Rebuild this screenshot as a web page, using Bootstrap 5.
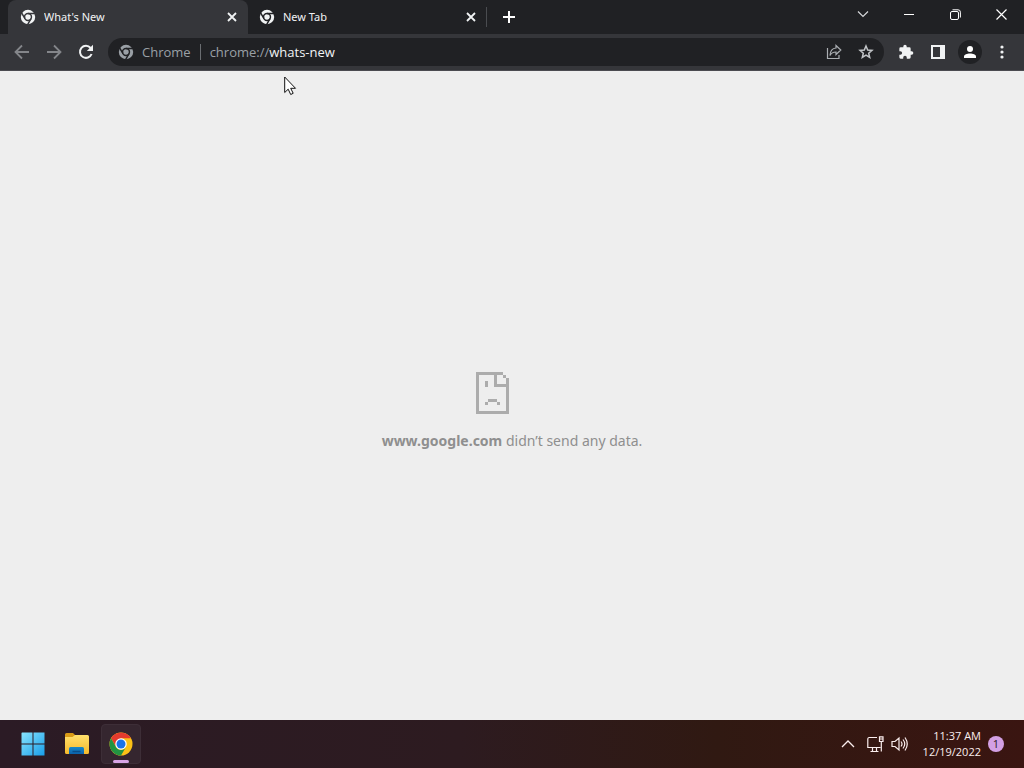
<!DOCTYPE html>
<html lang="en">
<head>
<meta charset="utf-8">
<meta name="viewport" content="width=device-width, initial-scale=1">
<title>What's New</title>
<link rel="stylesheet" href="https://cdn.jsdelivr.net/npm/bootstrap@5.3.0/dist/css/bootstrap.min.css">
<style>
  body { font-family: "Open Sans", "Noto Sans", sans-serif; font-size: 11px; line-height: 16px; background: #eee; }
  svg { display: block; flex: none; }
  button { border: 0; padding: 0; background: none; color: inherit; }
  .tabstrip { height: 34px; background: #202124; color: #e8eaed; padding-left: 8px; }
  .browser-tab { flex: 0 1 240px; min-width: 0; height: 34px; padding: 0 10px 0 12px; color: #f1f3f4; font-family: "Noto Sans", sans-serif; }
  .browser-tab.active { background: #35363a; border-radius: 8px 8px 0 0; }
  .browser-tab.idle { flex-basis: 238px; padding: 0 9px 0 11px; }
  .divider-line { width: 1px; height: 20px; background: #4a4c50; }
  .new-tab { width: 43px; height: 34px; }
  .win-btn { width: 46px; height: 28px; }
  .toolbar { height: 37px; background: #35363a; border-bottom: 1px solid #4b4b50; padding: 0 6px; color: #f1f3f4; }
  .tool { width: 32px; height: 28px; }
  .tool.dim { color: #84868a; }
  .omnibox { height: 28px; border-radius: 14px; background: #202124; color: #9aa0a6; font-size: 13px; line-height: 20px; margin: 0 6px; padding: 0 2px 0 10px; }
  .omnibox .divider-line { height: 16px; background: #6a6d71; margin: 0 9px; }
  .omnibox input { border: 0; outline: 0; padding: 0; background: none; color: #f1f3f4; min-width: 0; }
  .avatar { width: 24px; height: 24px; border-radius: 50%; background: #202124; }
  .failure { padding-top: 32px; color: #8f8f8f; font-family: "Noto Sans", sans-serif; font-size: 14px; line-height: 20px; }
  .sad-box { width: 72px; margin-bottom: 17px; }
  .taskbar { height: 48px; background: linear-gradient(90deg, #2b1b25, #2d1b20 45%, #301912 70%, #3a1511); color: #fbeeee; padding: 0 20px 0 11px; }
  .task { width: 44px; height: 40px; }
  .task.running span { width: 40px; height: 40px; border-radius: 4px; background: #35262f; border: 1px solid #3d2e37; }
  .task.running i { left: 14px; bottom: 1px; width: 16px; height: 3px; border-radius: 2px; background: #d9a5e6; }
  .tray-btn { width: 24px; height: 32px; }
  .tray-btn.more { width: 32px; }
  .clock { margin: 0 7px 0 11px; }
  .note-count { width: 16px; height: 16px; border-radius: 50%; background: #d3a0e4; color: #2b1b25; }
  .pointer { left: 284px; top: 76px; pointer-events: none; }
</style>
</head>
<body class="vh-100 d-flex flex-column overflow-hidden">
<svg width="0" height="0" class="position-absolute" aria-hidden="true">
  <defs>
    <symbol id="chrome-mono" viewBox="0 0 24 24">
      <mask id="cuts"><rect width="24" height="24" fill="#fff"/><g fill="none" stroke="#000" stroke-width="2.200"><circle cx="12" cy="12" r="5.200"/><path d="M12 6.800H24M7.500 14.600L1.500 4.200M16.500 14.600L10.500 25"/></g></mask>
      <circle cx="12" cy="12" r="10.800" fill="currentColor" mask="url(#cuts)"/>
    </symbol>
    <symbol id="close-x" viewBox="0 0 10 10"><path d="M1 1l8 8M9 1L1 9" stroke="currentColor" stroke-width="1.800"/></symbol>
  </defs>
</svg>

<header>
  <div class="tabstrip d-flex align-items-center">
    <div class="browser-tab active d-flex align-items-center">
      <svg width="16" height="16"><use href="#chrome-mono"/></svg>
      <span class="ms-2 flex-fill text-truncate">What's New</span>
      <button aria-label="Close What's New"><svg width="12" height="10"><use href="#close-x"/></svg></button>
    </div>
    <div class="browser-tab idle d-flex align-items-center">
      <svg width="16" height="16"><use href="#chrome-mono"/></svg>
      <span class="ms-2 flex-fill text-truncate">New Tab</span>
      <button aria-label="Close New Tab"><svg width="12" height="10"><use href="#close-x"/></svg></button>
    </div>
    <div class="divider-line"></div>
    <button class="new-tab d-flex align-items-center justify-content-center" aria-label="New tab"><svg width="12" height="12"><path d="M6 0v12M0 6h12" stroke="#fff" stroke-width="2"/></svg></button>
    <div class="d-flex ms-auto align-self-start">
      <button class="win-btn d-flex align-items-center justify-content-center" aria-label="Search tabs"><svg width="12" height="8"><path d="M1 1.500l5 5 5-5" fill="none" stroke="#d5d7da" stroke-width="1.200"/></svg></button>
      <button class="win-btn d-flex align-items-center justify-content-center" aria-label="Minimize"><svg width="10" height="3"><path d="M0 1.500h10" stroke="#fff"/></svg></button>
      <button class="win-btn d-flex align-items-center justify-content-center" aria-label="Restore"><svg width="11" height="11" fill="none" stroke="#fff"><rect x=".5" y="2.500" width="8" height="8" rx="1.500"/><path d="M2.500.8H8a2.400 2.400 0 0 1 2.400 2.400V8.500"/></svg></button>
      <button class="win-btn d-flex align-items-center justify-content-center" aria-label="Close"><svg width="11" height="11"><path d="M.5.5l10 10M10.500.5l-10 10" stroke="#fff" stroke-width="1.200"/></svg></button>
    </div>
  </div>

  <div class="toolbar d-flex align-items-center">
    <button class="tool dim d-flex align-items-center justify-content-center" aria-label="Back"><svg width="16" height="16" fill="none" stroke="currentColor" stroke-width="1.800"><path d="M15 8H2M8 1.500L1.500 8 8 14.500"/></svg></button>
    <button class="tool dim d-flex align-items-center justify-content-center" aria-label="Forward"><svg width="16" height="16" fill="none" stroke="currentColor" stroke-width="1.800"><path d="M1 8h13M8 1.500L14.500 8 8 14.500"/></svg></button>
    <button class="tool d-flex align-items-center justify-content-center" aria-label="Reload"><svg width="16" height="16"><path d="M13.600 10A6 6 0 1 1 12.600 4" fill="none" stroke="currentColor" stroke-width="2"/><path d="M15 .8V7H8.800z" fill="currentColor"/></svg></button>
    <div class="omnibox d-flex align-items-center flex-fill">
      <button class="d-flex align-items-center"><svg width="16" height="16"><use href="#chrome-mono"/></svg><span class="ms-2">Chrome</span></button>
      <div class="divider-line"></div>
      <label for="address">chrome://</label><input id="address" class="flex-fill" type="text" value="whats-new">
      <button class="tool d-flex align-items-center justify-content-center" aria-label="Share"><svg width="16" height="16" fill="none" stroke="#aaaeb2" stroke-width="1.200"><path d="M1.500 4v10.500h11.500V11M10 1.500L14.800 6 10 10.500V8C7 8 5.200 9 4 11.500 4.200 7 6.500 4.300 10 4z"/></svg></button>
      <button class="tool d-flex align-items-center justify-content-center" aria-label="Bookmark"><svg width="16" height="16" fill="none" stroke="#c2c5c8" stroke-width="1.500"><path d="M8 2l1.700 4 4.300.4-3.300 2.800 1 4.300L8 11.200l-3.700 2.300 1-4.300L2 6.400 6.300 6z"/></svg></button>
    </div>
    <button class="tool d-flex align-items-center justify-content-center" aria-label="Extensions"><svg width="16" height="16" viewBox="0 0 24 24" fill="currentColor"><path d="M20.500 11H19V7a2 2 0 0 0-2-2h-4V3.500a2.500 2.500 0 0 0-5 0V5H4a2 2 0 0 0-2 2v3.800h1.500a2.700 2.700 0 0 1 0 5.400H2V20a2 2 0 0 0 2 2h3.800v-1.500a2.700 2.700 0 0 1 5.400 0V22H17a2 2 0 0 0 2-2v-4h1.500a2.500 2.500 0 0 0 0-5z"/></svg></button>
    <button class="tool d-flex align-items-center justify-content-center" aria-label="Side panel"><svg width="14" height="14"><path fill="currentColor" fill-rule="evenodd" d="M0 0h14v14H0zM2 2v10h7V2z"/></svg></button>
    <button class="tool d-flex align-items-center justify-content-center" aria-label="Profile"><span class="avatar d-flex align-items-center justify-content-center"><svg width="12" height="12" fill="#fff"><circle cx="6" cy="3" r="3"/><path d="M0 12v-1.500C0 8.500 3 7.500 6 7.500s6 1 6 3V12z"/></svg></span></button>
    <button class="tool d-flex align-items-center justify-content-center" aria-label="Menu"><svg width="4" height="14" fill="currentColor"><circle cx="2" cy="2" r="1.600"/><circle cx="2" cy="7" r="1.600"/><circle cx="2" cy="12" r="1.600"/></svg></button>
  </div>
</header>

<main class="failure flex-fill d-flex flex-column align-items-center justify-content-center">
  <div class="sad-box"><svg width="33" height="42" viewBox="0 0 11 14" fill="#acacac" shape-rendering="crispEdges"><path d="M0 0h9v1H0zM0 1h1v12H0zM0 13h11v1H0zM10 2h1v11h-1zM6 1h1v4H6zM7 4h3v1H7zM9 1h1v1H9zM3 3h1v2H3zM3 10h1v1H3zM7 10h1v1H7zM4 9h3v1H4z"/></svg></div>
  <p class="mb-0"><strong>www.google.com</strong> didn’t send any data.</p>
</main>

<footer class="taskbar d-flex align-items-center">
  <button class="task d-flex align-items-center justify-content-center" aria-label="Start"><svg width="24" height="24"><defs><linearGradient id="win" x1="0" y1="0" x2="24" y2="24" gradientUnits="userSpaceOnUse"><stop stop-color="#8be6ff"/><stop offset="1" stop-color="#169ce8"/></linearGradient></defs><path fill="url(#win)" d="M1 .5h10.500v11H.5V1zM12.500.5h11v11h-11zM.5 12.500h11v11H.5zM12.500 12.500h11v11h-11z"/></svg></button>
  <button class="task d-flex align-items-center justify-content-center" aria-label="File Explorer"><svg width="26" height="24"><defs><linearGradient id="fold" x2="0" y2="1"><stop stop-color="#ffe06c"/><stop offset="1" stop-color="#f5b92b"/></linearGradient><linearGradient id="tray" x2="0" y2="1"><stop stop-color="#1689c9"/><stop offset="1" stop-color="#0b62ab"/></linearGradient></defs><path fill="#d99b16" d="M1 2.500Q1 1 2.500 1H9l2.500 2.500L9 6H1z"/><path fill="url(#fold)" d="M1 5h7.500l2.500-2h12.500Q25 3 25 4.500v16q0 1.500-1.500 1.500h-21Q1 22 1 20.500z"/><path fill="url(#tray)" d="M5 22v-5.500Q5 15 6.500 15h12q1.500 0 1.500 1.500V22z"/><path d="M8.500 19.500h8" stroke="#0a4c88" stroke-width="1.500"/></svg></button>
  <button class="task running position-relative d-flex align-items-center justify-content-center" aria-label="Google Chrome"><span class="d-flex align-items-center justify-content-center"><svg width="24" height="24" viewBox="0 0 48 48"><circle cx="24" cy="24" r="23" fill="#fbc116"/><path fill="#e33b2e" d="M4.100 12.500A23 23 0 0 1 43.900 12.500H24L14 29.700z"/><path fill="#229342" d="M4.100 12.500A23 23 0 0 0 24 47l10-17.200a11.500 11.500 0 0 1-20 0z"/><circle cx="24" cy="24" r="11.500" fill="#fff"/><circle cx="24" cy="24" r="9" fill="#1a73e8"/></svg></span><i class="position-absolute"></i></button>
  <div class="d-flex align-items-center ms-auto">
    <button class="tray-btn more d-flex align-items-center justify-content-center" aria-label="Show hidden icons"><svg width="14" height="8"><path d="M1 7l6-6 6 6" fill="none" stroke="currentColor" stroke-width="1.300"/></svg></button>
    <button class="tray-btn d-flex align-items-center justify-content-center" aria-label="Network"><svg width="17" height="17" fill="none" stroke="currentColor" stroke-width="1.200"><path d="M10 1.500H2A1.500 1.500 0 0 0 .8 3v8.500h12.700M3.500 15.500h8M5.500 11.500v4M9.500 11.500v4M12.500.8h3.500v4.700h-3.500zM12.500 3h3.500M14.300 5.500v10"/></svg></button>
    <button class="tray-btn d-flex align-items-center justify-content-center" aria-label="Volume"><svg width="17" height="16" fill="none" stroke="currentColor" stroke-width="1.200"><path d="M1 5.500h3L8 2v12L4 10.500H1zM10 5.500q2 2.500 0 5M12 3.500q3.500 4.500 0 9M14 1.500q4.500 6.500 0 13"/></svg></button>
    <time class="clock text-end" datetime="2022-12-19T11:37">11:37 AM<br>12/19/2022</time>
    <span class="note-count d-flex align-items-center justify-content-center">1</span>
  </div>
</footer>

<svg class="pointer position-absolute" width="13" height="20" aria-hidden="true"><path d="M.7 1v15.500l3.500-3.300 2.500 5.300 2.500-1.200-2.500-5H11.500z" fill="#fff" stroke="#111"/></svg>
<script src="https://cdn.jsdelivr.net/npm/bootstrap@5.3.0/dist/js/bootstrap.bundle.min.js"></script>
</body>
</html>
